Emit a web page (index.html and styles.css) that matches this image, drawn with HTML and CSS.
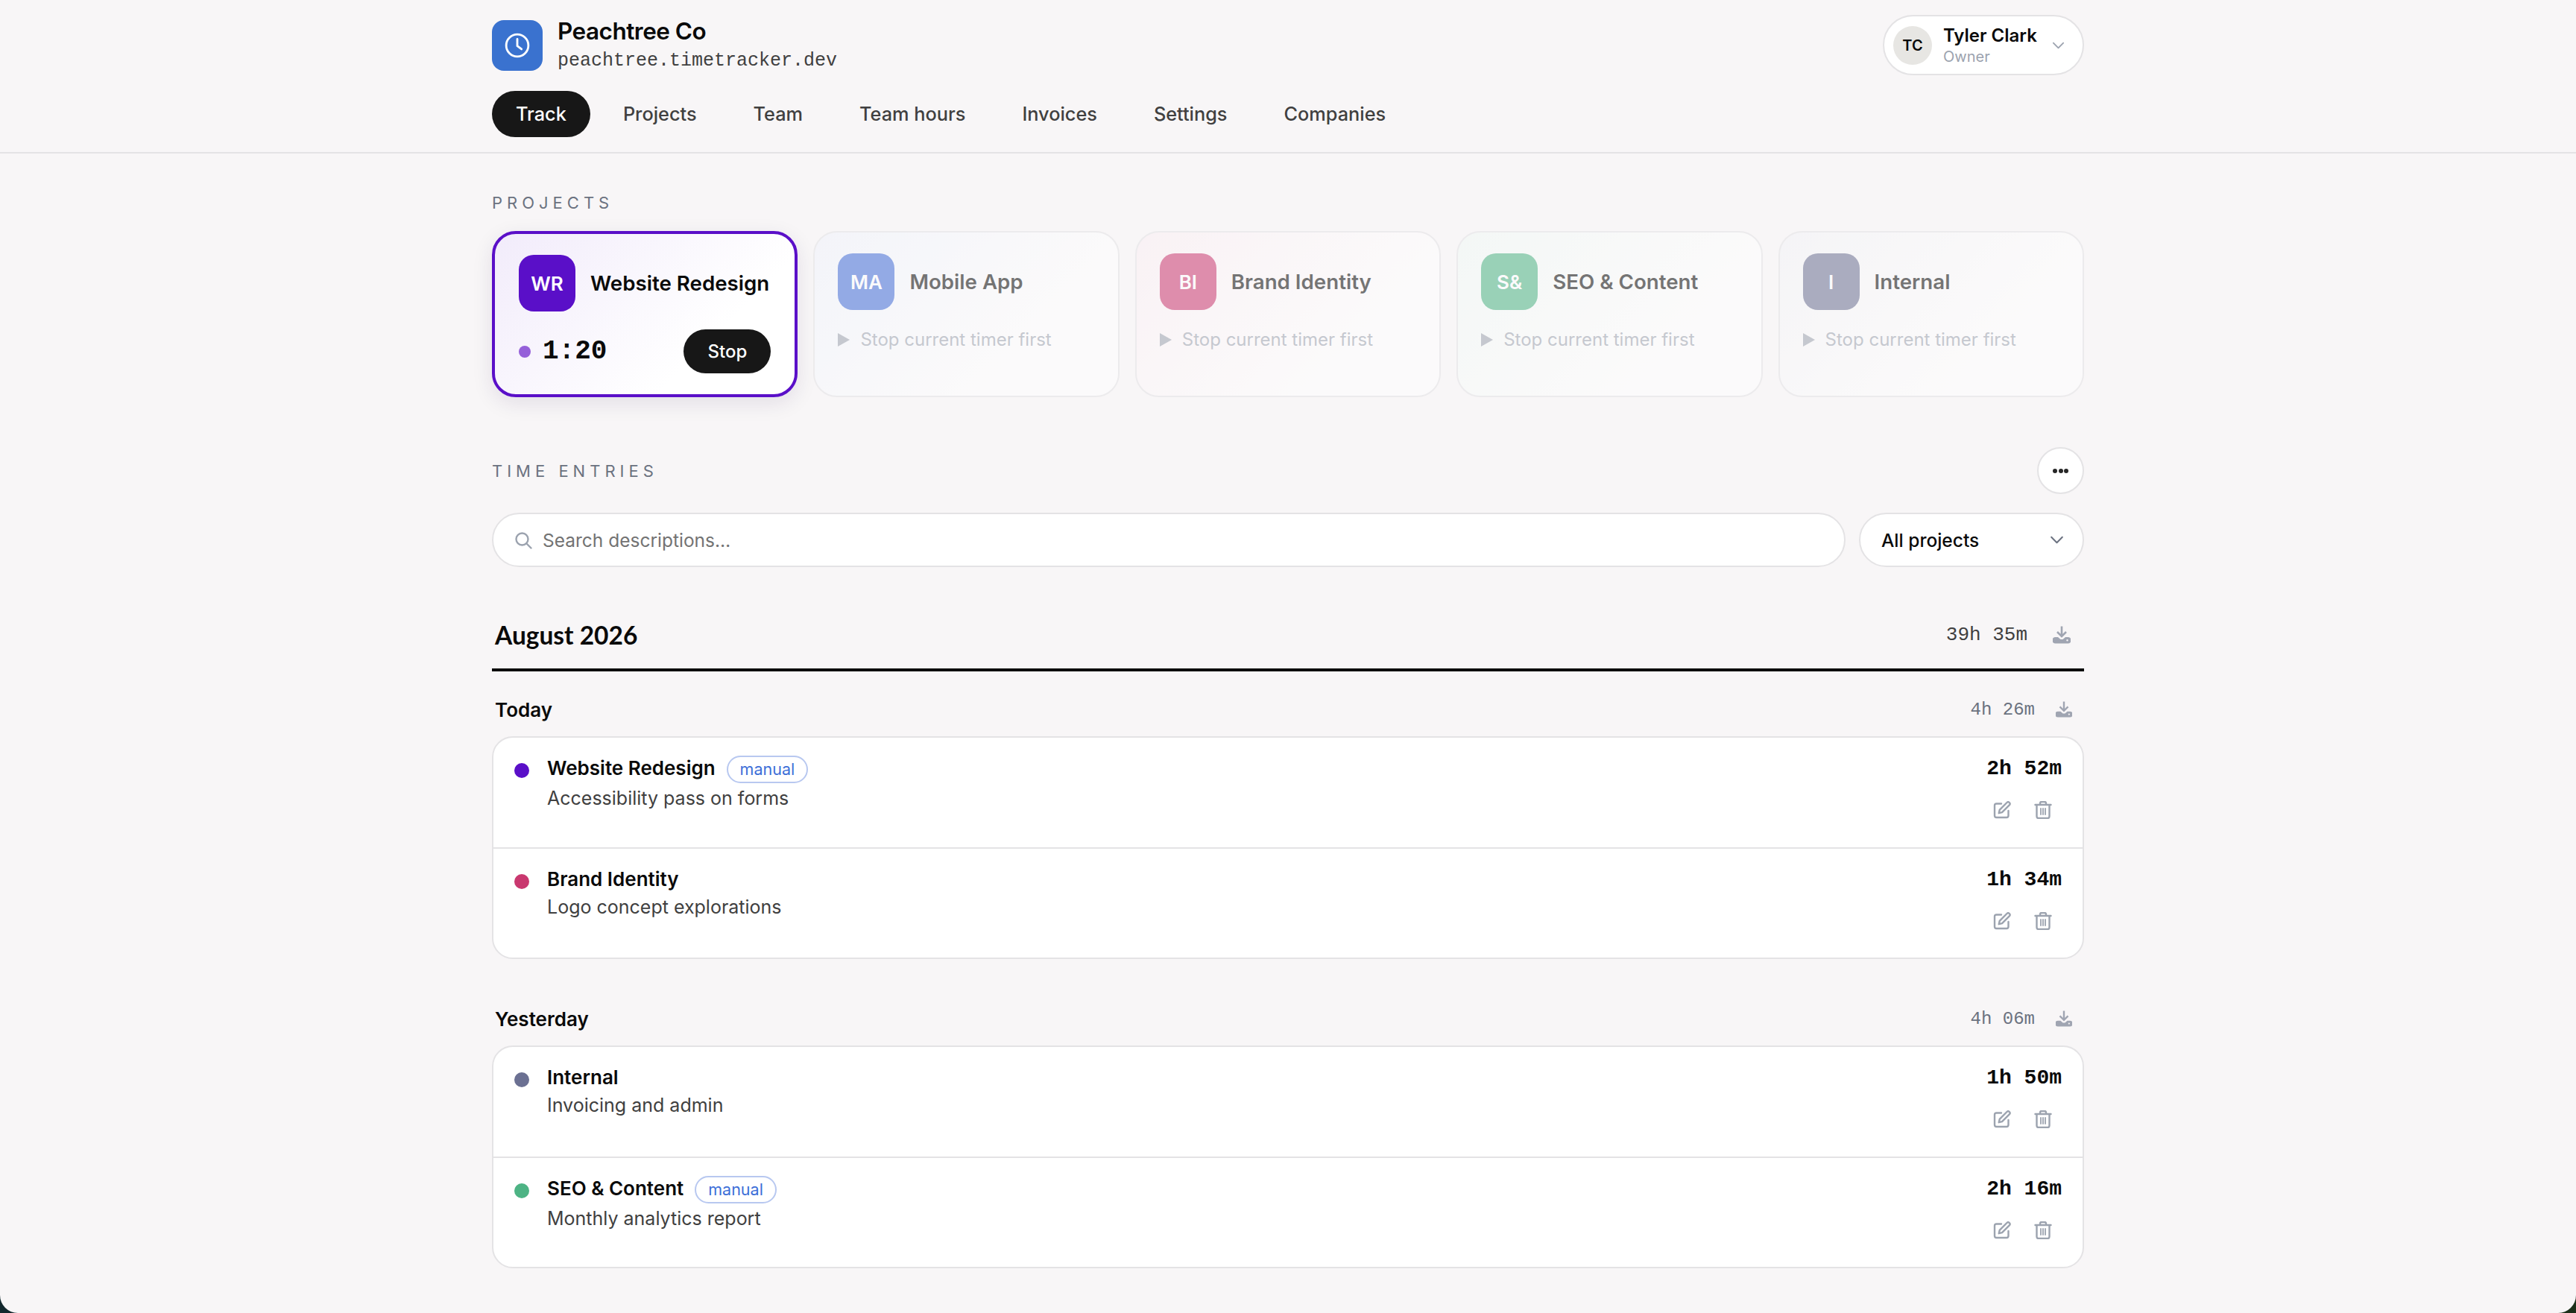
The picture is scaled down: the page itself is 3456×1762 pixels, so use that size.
FILE: index.html
```html
<!DOCTYPE html>
<html lang="en">
<head>
    <meta charset="UTF-8">
    <meta name="viewport" content="width=device-width, initial-scale=1.0">
    <title>Peachtree Co</title>
    <link rel="stylesheet" href="styles.css">
</head>
<body>
    <svg class="icon-defs" width="0" height="0">
        <symbol id="i-download" viewBox="0 0 24 24">
            <path d="M12 0.5v13M6 8l6 6 6-6" fill="none" stroke="currentColor" stroke-width="2.600"/>
            <path fill-rule="evenodd" fill="currentColor" d="M3.500 15h3.500l3.500 3h3l3.500-3h3.500a4 4 0 0 1 0 8.500h-17a4 4 0 0 1 0-8.500zM19.500 18a1.200 1.200 0 1 0 0 2.400 1.200 1.200 0 0 0 0-2.400z"/>
        </symbol>
        <symbol id="i-edit" viewBox="0 0 24 24">
            <path d="M11 3.500H4.500a2.500 2.500 0 0 0-2.500 2.500v13.500a2.500 2.500 0 0 0 2.500 2.500H18a2.500 2.500 0 0 0 2.500-2.500V13" fill="none" stroke="currentColor" stroke-width="2.400" stroke-linecap="round"/>
            <path d="M18.500 2a2.300 2.300 0 0 1 3.300 3.300L12 15.200l-4.300 1 1-4.300z" fill="none" stroke="currentColor" stroke-width="2.400" stroke-linejoin="round"/>
        </symbol>
        <symbol id="i-trash" viewBox="0 0 24 24">
            <path d="M1.500 5h21M8 5V3a2 2 0 0 1 2-2h4a2 2 0 0 1 2 2v2M3.500 5v15.500a2.500 2.500 0 0 0 2.500 2.500h12a2.500 2.500 0 0 0 2.500-2.500V5" fill="none" stroke="currentColor" stroke-width="2.400" stroke-linecap="round"/>
            <path d="M9 10v8M12 10v8M15 10v8" fill="none" stroke="currentColor" stroke-width="1.800" stroke-linecap="round"/>
        </symbol>
        <symbol id="i-play" viewBox="0 0 16 18">
            <path d="M0 0l16 9-16 9z" fill="currentColor"/>
        </symbol>
        <symbol id="i-chevron" viewBox="0 0 20 12">
            <path d="M2 2l8 8 8-8" fill="none" stroke="currentColor" stroke-width="2.200" stroke-linecap="round" stroke-linejoin="round"/>
        </symbol>
    </svg>

    <div class="page">
        <header class="topbar">
            <div class="wrap">
                <div class="topbar-row">
                    <div class="brand">
                        <div class="brand-logo">
                            <svg width="34" height="34" viewBox="0 0 24 24" fill="none" stroke="#fff" stroke-width="2" stroke-linecap="round" stroke-linejoin="round">
                                <circle cx="12" cy="12" r="10.500"/>
                                <path d="M12 6v6.500l4 3"/>
                            </svg>
                        </div>
                        <div>
                            <div class="brand-name">Peachtree Co</div>
                            <div class="brand-domain">peachtree.timetracker.dev</div>
                        </div>
                    </div>
                    <div class="account">
                        <div class="account-avatar">TC</div>
                        <div class="account-text">
                            <div class="account-name">Tyler Clark</div>
                            <div class="account-role">Owner</div>
                        </div>
                        <svg class="account-chevron" width="17" height="10"><use href="#i-chevron"/></svg>
                    </div>
                </div>
                <nav class="nav">
                    <a class="nav-link active">Track</a>
                    <a class="nav-link">Projects</a>
                    <a class="nav-link">Team</a>
                    <a class="nav-link">Team hours</a>
                    <a class="nav-link">Invoices</a>
                    <a class="nav-link">Settings</a>
                    <a class="nav-link">Companies</a>
                </nav>
            </div>
        </header>

        <main class="wrap main">
            <div class="section-label projects-label">PROJECTS</div>
            <div class="project-grid">
                <div class="project-card running wr">
                    <div class="project-head">
                        <div class="project-avatar">WR</div>
                        <div class="project-name">Website Redesign</div>
                    </div>
                    <div class="timer-row">
                        <span class="timer-dot"></span>
                        <span class="timer-time">1:20</span>
                        <button class="stop-btn">Stop</button>
                    </div>
                </div>
                <div class="project-card blocked ma">
                    <div class="project-head">
                        <div class="project-avatar">MA</div>
                        <div class="project-name">Mobile App</div>
                    </div>
                    <div class="project-hint"><svg width="16" height="18"><use href="#i-play"/></svg>Stop current timer first</div>
                </div>
                <div class="project-card blocked bi">
                    <div class="project-head">
                        <div class="project-avatar">BI</div>
                        <div class="project-name">Brand Identity</div>
                    </div>
                    <div class="project-hint"><svg width="16" height="18"><use href="#i-play"/></svg>Stop current timer first</div>
                </div>
                <div class="project-card blocked se">
                    <div class="project-head">
                        <div class="project-avatar">S&amp;</div>
                        <div class="project-name">SEO &amp; Content</div>
                    </div>
                    <div class="project-hint"><svg width="16" height="18"><use href="#i-play"/></svg>Stop current timer first</div>
                </div>
                <div class="project-card blocked in">
                    <div class="project-head">
                        <div class="project-avatar">I</div>
                        <div class="project-name">Internal</div>
                    </div>
                    <div class="project-hint"><svg width="16" height="18"><use href="#i-play"/></svg>Stop current timer first</div>
                </div>
            </div>

            <div class="entries-head">
                <div class="section-label">TIME ENTRIES</div>
                <button class="more-btn" aria-label="More"><span></span><span></span><span></span></button>
            </div>

            <div class="filters">
                <div class="search">
                    <svg width="24" height="24" viewBox="0 0 24 24" fill="none" stroke="#9ca3af" stroke-width="2.400" stroke-linecap="round">
                        <circle cx="10.500" cy="10.500" r="8"/>
                        <path d="M16.500 16.500l6 6"/>
                    </svg>
                    <span>Search descriptions…</span>
                </div>
                <div class="select">
                    <span>All projects</span>
                    <svg width="19" height="11"><use href="#i-chevron"/></svg>
                </div>
            </div>

            <div class="month-head">
                <div class="month-name">August 2026</div>
                <div class="month-total">39h 35m</div>
                <svg class="export" width="24" height="24"><use href="#i-download"/></svg>
            </div>

            <section class="day first">
                <div class="day-head">
                    <div class="day-name">Today</div>
                    <div class="day-total">4h 26m</div>
                    <svg class="export" width="22" height="22"><use href="#i-download"/></svg>
                </div>
                <div class="entries">
                    <div class="entry">
                        <span class="entry-dot wr"></span>
                        <div class="entry-body">
                            <div class="entry-title">Website Redesign <span class="badge">manual</span></div>
                            <div class="entry-desc">Accessibility pass on forms</div>
                        </div>
                        <div class="entry-side">
                            <div class="entry-time">2h 52m</div>
                            <div class="entry-actions">
                                <svg width="24" height="24"><use href="#i-edit"/></svg>
                                <svg width="24" height="24"><use href="#i-trash"/></svg>
                            </div>
                        </div>
                    </div>
                    <div class="entry">
                        <span class="entry-dot bi"></span>
                        <div class="entry-body">
                            <div class="entry-title">Brand Identity</div>
                            <div class="entry-desc">Logo concept explorations</div>
                        </div>
                        <div class="entry-side">
                            <div class="entry-time">1h 34m</div>
                            <div class="entry-actions">
                                <svg width="24" height="24"><use href="#i-edit"/></svg>
                                <svg width="24" height="24"><use href="#i-trash"/></svg>
                            </div>
                        </div>
                    </div>
                </div>
            </section>

            <section class="day">
                <div class="day-head">
                    <div class="day-name">Yesterday</div>
                    <div class="day-total">4h 06m</div>
                    <svg class="export" width="22" height="22"><use href="#i-download"/></svg>
                </div>
                <div class="entries">
                    <div class="entry">
                        <span class="entry-dot in"></span>
                        <div class="entry-body">
                            <div class="entry-title">Internal</div>
                            <div class="entry-desc">Invoicing and admin</div>
                        </div>
                        <div class="entry-side">
                            <div class="entry-time">1h 50m</div>
                            <div class="entry-actions">
                                <svg width="24" height="24"><use href="#i-edit"/></svg>
                                <svg width="24" height="24"><use href="#i-trash"/></svg>
                            </div>
                        </div>
                    </div>
                    <div class="entry">
                        <span class="entry-dot se"></span>
                        <div class="entry-body">
                            <div class="entry-title">SEO &amp; Content <span class="badge">manual</span></div>
                            <div class="entry-desc">Monthly analytics report</div>
                        </div>
                        <div class="entry-side">
                            <div class="entry-time">2h 16m</div>
                            <div class="entry-actions">
                                <svg width="24" height="24"><use href="#i-edit"/></svg>
                                <svg width="24" height="24"><use href="#i-trash"/></svg>
                            </div>
                        </div>
                    </div>
                </div>
            </section>
        </main>
    </div>
</body>
</html>
```

FILE: styles.css
```css
* {
    box-sizing: border-box;
}
html, body {
    margin: 0;
    height: 100%;
}
body {
    font-family: Inter, "Liberation Sans", sans-serif;
    color: #0a0a0a;
    background: linear-gradient(to right, #12282d, #1c3019);
    overflow: hidden;
}
.icon-defs {
    position: absolute;
}
.page {
    height: 1762px;
    background: #f8f6f7;
    border-radius: 0 0 24px 24px;
    overflow: hidden;
}
.wrap {
    width: 2136px;
    margin: 0 auto;
}

/* top bar */
.topbar {
    padding: 20px 0;
    border-bottom: 2px solid #e4e3e5;
}
.topbar-row {
    display: flex;
    justify-content: space-between;
    align-items: center;
}
.brand {
    display: flex;
    align-items: center;
    gap: 20px;
}
.brand-logo {
    width: 68px;
    height: 68px;
    border-radius: 16px;
    background: #3a72cf;
    display: flex;
    align-items: center;
    justify-content: center;
}
.brand-name {
    font-size: 31.500px;
    font-weight: 600;
    line-height: 38px;
    letter-spacing: -0.5px;
}
.brand-domain {
    font-family: "Liberation Mono", monospace;
    font-size: 25px;
    line-height: 34px;
    margin-top: 4px;
    color: #404040;
}
.account {
    width: 270px;
    height: 81px;
    display: flex;
    align-items: center;
    padding: 0 24px 0 12px;
    background: #fff;
    border: 2px solid #e4e3e5;
    border-radius: 41px;
}
.account-avatar {
    width: 52px;
    height: 52px;
    border-radius: 50%;
    background: #e7e6e3;
    font-size: 20px;
    font-weight: 600;
    display: flex;
    align-items: center;
    justify-content: center;
    margin-right: 15px;
}
.account-text {
    flex: 1;
}
.account-name {
    font-size: 24px;
    font-weight: 600;
    line-height: 30px;
}
.account-role {
    font-size: 20px;
    line-height: 26px;
    color: #9ca3af;
}
.account-chevron {
    color: #9ca3af;
}
.nav {
    display: flex;
    margin-top: 21px;
    gap: 12px;
}
.nav-link {
    height: 62px;
    padding: 0 32px;
    border-radius: 31px;
    font-size: 25.300px;
    font-weight: 500;
    line-height: 62px;
    color: #404040;
}
.nav-link.active {
    background: #171717;
    color: #fff;
}

/* projects */
.main {
    padding-top: 51px;
}
.section-label {
    font-size: 22px;
    line-height: 30px;
    letter-spacing: 6px;
    color: #6b7280;
    font-weight: 400;
}
.projects-label {
    margin-bottom: 23px;
}
.project-grid {
    display: grid;
    grid-template-columns: repeat(5, 1fr);
    gap: 21px;
}
.wr { --c: #5a0fc8; }
.ma { --c: #416dd8; }
.bi { --c: #c9386f; }
.se { --c: #4db384; }
.in { --c: #6b7092; }
.project-card {
    padding: 28px 32px;
    border: 2px solid #e4e3e5;
    border-radius: 32px;
    background: linear-gradient(135deg, color-mix(in srgb, var(--c) 8%, #fff), #fff 70%);
}
.project-card.blocked {
    padding-left: 31px;
    opacity: 0.55;
}
.project-card.running {
    border: 4px solid var(--c);
    box-shadow: 0 8px 28px rgba(40, 20, 80, 0.1);
}
.project-head {
    display: flex;
    align-items: center;
    gap: 20px;
}
.project-avatar {
    width: 76px;
    height: 76px;
    flex: none;
    border-radius: 20px;
    background: var(--c);
    color: #fff;
    font-size: 26px;
    font-weight: 600;
    display: flex;
    align-items: center;
    justify-content: center;
}
.project-name {
    font-size: 27.700px;
    font-weight: 600;
    white-space: nowrap;
}
.timer-row {
    display: flex;
    align-items: center;
    margin-top: 24px;
}
.timer-dot {
    width: 16px;
    height: 16px;
    border-radius: 50%;
    background: #9560d9;
    margin-right: 16px;
}
.timer-time {
    font-family: "Liberation Mono", monospace;
    font-size: 36px;
    font-weight: 700;
}
.stop-btn {
    width: 117px;
    height: 59px;
    margin-left: auto;
    border: none;
    border-radius: 30px;
    background: #171717;
    color: #fff;
    font-family: inherit;
    font-size: 24px;
    font-weight: 500;
}
.project-hint {
    display: flex;
    align-items: center;
    gap: 14px;
    margin-top: 24px;
    font-size: 24px;
    line-height: 32px;
    color: #9ca3af;
}

/* time entries */
.entries-head {
    display: flex;
    justify-content: space-between;
    align-items: center;
    margin-top: 67px;
}
.more-btn {
    width: 63px;
    height: 63px;
    padding: 0;
    background: #fff;
    border: 2px solid #e4e3e5;
    border-radius: 50%;
    display: flex;
    align-items: center;
    justify-content: center;
    gap: 1.500px;
}
.more-btn span {
    width: 6px;
    height: 6px;
    border-radius: 50%;
    background: #262626;
}
.filters {
    display: flex;
    gap: 18px;
    margin-top: 25px;
}
.search,
.select {
    height: 73px;
    display: flex;
    align-items: center;
    background: #fff;
    border: 2px solid #e4e3e5;
    border-radius: 37px;
}
.search {
    flex: 1;
    padding-left: 28px;
    gap: 14px;
    font-size: 24.500px;
    color: #737373;
}
.select {
    width: 302px;
    justify-content: space-between;
    padding: 0 25px 0 28px;
    font-size: 24.500px;
    color: #0a0a0a;
    font-weight: 500;
}
.select svg {
    color: #6b7280;
}
.month-head {
    display: flex;
    align-items: center;
    height: 78px;
    margin-top: 62px;
    padding: 0 18px 16px 4px;
    border-bottom: 4px solid #0a0a0a;
}
.month-name {
    font-family: Lato, sans-serif;
    font-size: 33.500px;
    font-weight: 700;
    flex: 1;
}
.month-total {
    font-family: "Liberation Mono", monospace;
    font-size: 26px;
    color: #404040;
    margin-right: 34px;
}
.export {
    color: #a0a5b2;
}
.day {
    margin-top: 63px;
}
.day.first {
    margin-top: 34px;
}
.day-head {
    display: flex;
    align-items: center;
    height: 34px;
    margin-bottom: 19px;
    padding: 0 16px 0 4px;
}
.day-name {
    font-size: 26px;
    font-weight: 600;
    flex: 1;
}
.day-total {
    font-family: "Liberation Mono", monospace;
    font-size: 24px;
    color: #6b7280;
    margin-right: 28px;
}
.entries {
    background: #fff;
    border: 2px solid #e4e3e5;
    border-radius: 28px;
}
.entry {
    display: flex;
    align-items: flex-start;
    padding: 24px 28px 0;
    height: 147px;
}
.entry + .entry {
    border-top: 2px solid #e4e3e5;
    height: 148px;
}
.entry-dot {
    width: 20px;
    height: 20px;
    border-radius: 50%;
    background: var(--c);
    margin: 10px 24px 0 0;
    flex: none;
}
.entry-body {
    flex: 1;
}
.entry-title {
    display: flex;
    align-items: flex-start;
    gap: 15px;
    font-size: 26px;
    font-weight: 600;
    line-height: 34px;
}
.badge {
    height: 37px;
    padding: 0 16px;
    border: 2px solid #b8c8f0;
    border-radius: 19px;
    font-size: 21.500px;
    font-weight: 400;
    line-height: 33px;
    color: #3d6fd8;
}
.entry-desc {
    margin-top: 3px;
    font-size: 25px;
    line-height: 34px;
    color: #404040;
}
.entry-side {
    display: flex;
    flex-direction: column;
    align-items: flex-end;
}
.entry-time {
    font-family: "Liberation Mono", monospace;
    font-size: 28px;
    font-weight: 700;
    line-height: 36px;
}
.entry-actions {
    display: flex;
    gap: 31px;
    margin: 25px 13px 0 0;
    color: #9ca3af;
}
```
